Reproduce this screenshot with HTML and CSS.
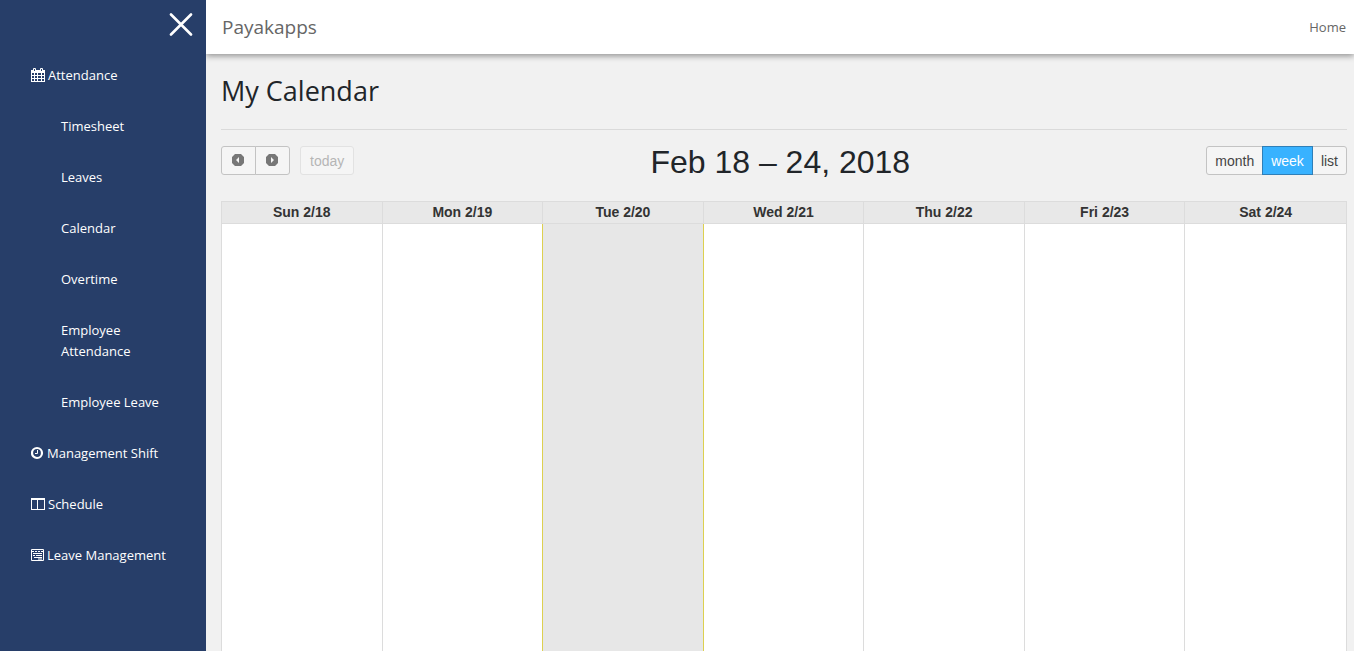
FILE: index.html
```html
<!DOCTYPE html>
<html lang="en">
<head>
<meta charset="utf-8">
<meta name="viewport" content="width=device-width, initial-scale=1">
<title>My Calendar - Payakapps</title>
<link rel="stylesheet" href="styles.css">
</head>
<body>
<div class="app">
  <aside class="sidebar">
    <button class="close" type="button" aria-label="Close menu">
      <svg width="24" height="24" viewBox="0 0 24 24"><path d="M2 2.500 22 22.500M22 2.500 2 22.500" stroke="currentColor" stroke-width="2.600" stroke-linecap="round" fill="none"/></svg>
    </button>
    <nav class="menu">
      <a class="item" href="#"><svg class="icon" viewBox="0 0 14 14"><path fill="currentColor" fill-rule="evenodd" d="M0 2h2V1q0-1 1-1h1q1 0 1 1v1h4V1q0-1 1-1h1q1 0 1 1v1h2v12H0zM1 5v2h2V5zM4 5v2h2V5zM7 5v2h3V5zM11 5v2h2V5zM1 8v2h2V8zM4 8v2h2V8zM7 8v2h3V8zM11 8v2h2V8zM1 11v2h2v-2zM4 11v2h2v-2zM7 11v2h3v-2zM11 11v2h2v-2zM3 1v2h1V1zM10 1v2h1V1z"/></svg>Attendance</a>
      <a class="item sub" href="#">Timesheet</a>
      <a class="item sub" href="#">Leaves</a>
      <a class="item sub" href="#">Calendar</a>
      <a class="item sub" href="#">Overtime</a>
      <a class="item sub" href="#">Employee Attendance</a>
      <a class="item sub" href="#">Employee Leave</a>
      <a class="item" href="#"><svg class="icon narrow" viewBox="0 0 13 14"><circle cx="6" cy="7" r="5" fill="none" stroke="currentColor" stroke-width="2.200"/><path d="M6.500 4v3.500H4" fill="none" stroke="currentColor"/></svg>Management Shift</a>
      <a class="item" href="#"><svg class="icon" viewBox="0 0 14 14"><path fill="currentColor" fill-rule="evenodd" d="M0 1h14v12H0zM1 3v9h5V3zM7 3v9h6V3z"/></svg>Schedule</a>
      <a class="item" href="#"><svg class="icon narrow" viewBox="0 0 13 14"><path d="M.5 1.500h12v11H.5z" fill="none" stroke="currentColor"/><path d="M1 3.500h2M4 3.500h2M7 3.500h2M10 3.500h2M2 5.500h9M2 7.500h2M5 7.500h6M3 9.500h8M7 11h4" fill="none" stroke="currentColor"/></svg>Leave Management</a>
    </nav>
  </aside>
  <div class="page">
    <header class="topbar">
      <a class="brand" href="#">Payakapps</a>
      <a class="home" href="#">Home</a>
    </header>
    <main class="content">
      <h1 class="title">My Calendar</h1>
      <div class="toolbar">
        <div class="left">
          <div class="group">
            <button class="btn arrow" type="button" aria-label="Previous"><svg width="12" height="12" viewBox="0 0 12 12"><path fill="currentColor" fill-rule="evenodd" d="M3 0h6l3 3v6l-3 3H3L0 9V3zM7 3v6L4 6z"/></svg></button>
            <button class="btn arrow" type="button" aria-label="Next"><svg width="12" height="12" viewBox="0 0 12 12"><path fill="currentColor" fill-rule="evenodd" d="M3 0h6l3 3v6l-3 3H3L0 9V3zM5 3v6l3-3z"/></svg></button>
          </div>
          <button class="btn today-btn" type="button" disabled>today</button>
        </div>
        <h2 class="range">Feb 18 – 24, 2018</h2>
        <div class="group right">
          <button class="btn" type="button">month</button>
          <button class="btn active" type="button">week</button>
          <button class="btn" type="button">list</button>
        </div>
      </div>
      <table class="week">
        <thead>
          <tr><th>Sun 2/18</th><th>Mon 2/19</th><th>Tue 2/20</th><th>Wed 2/21</th><th>Thu 2/22</th><th>Fri 2/23</th><th>Sat 2/24</th></tr>
        </thead>
        <tbody>
          <tr><td></td><td class="before-today"></td><td class="today"></td><td></td><td></td><td></td><td></td></tr>
        </tbody>
      </table>
    </main>
  </div>
</div>
</body>
</html>
```
FILE: styles.css
```css
* { box-sizing: border-box; }
body {
  margin: 0;
  background: #f1f1f1;
  color: #212529;
  font-family: "Segoe UI", "Open Sans", "Noto Sans", sans-serif;
  font-size: 13px;
  line-height: 21px;
}
a { text-decoration: none; }
.app { display: flex; height: 100vh; overflow: hidden; }
.sidebar { flex: 0 0 206px; background: #273e69; color: #fff; }
.close {
  display: block;
  margin: 12px 13px 0 auto;
  padding: 0;
  width: 24px;
  height: 24px;
  border: 0;
  background: none;
  color: #fff;
}
.close svg { display: block; }
.menu { display: flex; flex-direction: column; gap: 30px; padding: 29px 30px 0 31px; }
.item { display: flex; align-items: center; gap: 3px; color: #fff; white-space: nowrap; }
.sub { padding-left: 30px; white-space: normal; }
.icon { width: 14px; height: 14px; margin-bottom: 1px; flex: none; }
.narrow { width: 13px; }
.page { flex: 1; min-width: 0; display: flex; flex-direction: column; }
.topbar {
  flex: none;
  display: flex;
  align-items: center;
  justify-content: space-between;
  height: 54px;
  padding: 0 8px 0 16px;
  background: #fff;
  box-shadow: 0 2px 6px rgba(0, 0, 0, 0.4);
  clip-path: inset(0 0 -12px 0);
}
.brand { color: #666; font-size: 19px; }
.home { color: #666; }
.content { flex: 1; min-height: 0; display: flex; flex-direction: column; padding: 16px 7px 0 15px; }
.title {
  margin: 0 0 16px;
  padding-bottom: 17px;
  border-bottom: 1px solid #dadada;
  font-size: 27px;
  font-weight: 400;
  line-height: 42px;
}
.toolbar {
  display: grid;
  grid-template-columns: auto 1fr auto;
  align-items: start;
  margin-bottom: 22px;
  font-family: Arial, "Liberation Sans", sans-serif;
}
.left, .group { display: flex; }
.left { gap: 10px; }
.btn {
  height: 29px;
  margin: 0 0 0 -1px;
  padding: 0 8px;
  border: 1px solid #c3c3c3;
  background: #f5f5f5;
  color: #444;
  font: 14px Arial, "Liberation Sans", sans-serif;
}
.btn:first-child { margin-left: 0; border-radius: 3px 0 0 3px; }
.btn:last-child { border-radius: 0 3px 3px 0; }
.arrow { display: grid; place-items: center; width: 35px; padding: 0 1px 2px 0; color: #777; }
.left .today-btn { margin: 0; padding: 0 9px; border-radius: 3px; border-color: #e2e2e2; color: #b5b5b5; }
.group .active { position: relative; background: #38b2ff; border-color: #2f7fb8; color: #fff; }
.range { margin: 0; text-align: center; font-size: 32px; font-weight: 400; line-height: 33px; }
.week {
  flex: 1;
  display: flex;
  flex-direction: column;
  border: 1px solid #dcdcdc;
  border-bottom: 0;
  background: #fff;
  font-family: Arial, "Liberation Sans", sans-serif;
}
.week tr { display: grid; grid-template-columns: repeat(7, 1fr); height: 100%; }
.week tbody { flex: 1; }
.week th, .week td { padding: 0; border-right: 1px solid #dcdcdc; }
.week th:last-child, .week td:last-child { border-right: 0; }
.week th {
  border-bottom: 1px solid #dcdcdc;
  background: #e8e8e8;
  color: #333;
  font-size: 14px;
  line-height: 21px;
}
.week .today { background: #e7e7e7; }
.week .today, .week .before-today { border-right-color: #ddd04f; }
```
